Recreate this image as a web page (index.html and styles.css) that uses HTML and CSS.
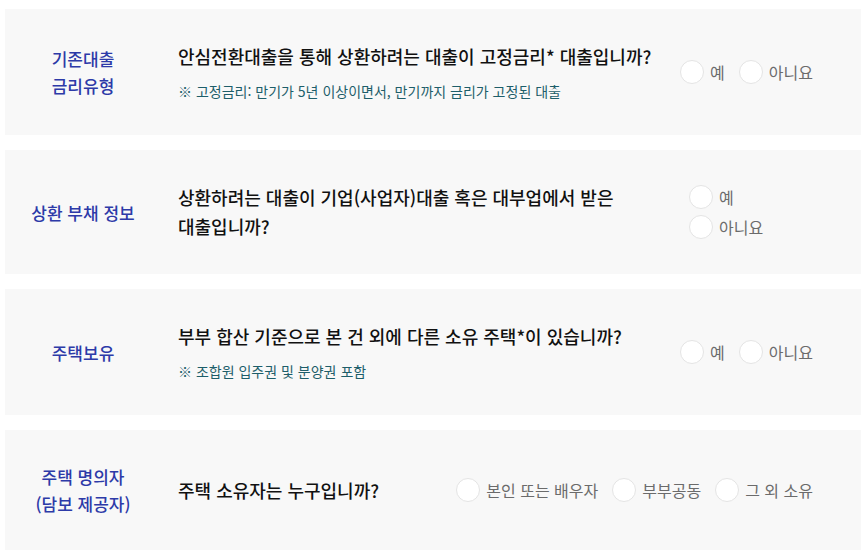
FILE: index.html
```html
<!DOCTYPE html>
<html lang="ko">
<head>
<meta charset="utf-8">
<title>안심전환대출 자격 확인</title>
<link rel="stylesheet" href="styles.css">
</head>
<body>
<div class="list">
  <section class="row">
    <div class="label">기존대출<br>금리유형</div>
    <div class="body">
      <p class="q">안심전환대출을 통해 상환하려는 대출이 고정금리* 대출입니까?</p>
      <p class="note">※ 고정금리: 만기가 5년 이상이면서, 만기까지 금리가 고정된 대출</p>
    </div>
    <div class="opts">
      <label class="opt"><span class="dot"></span>예</label>
      <label class="opt"><span class="dot"></span>아니요</label>
    </div>
  </section>

  <section class="row">
    <div class="label">상환 부채 정보</div>
    <div class="body narrow">
      <p class="q tall">상환하려는 대출이 기업(사업자)대출 혹은 대부업에서 받은 대출입니까?</p>
    </div>
    <div class="opts stack">
      <label class="opt"><span class="dot"></span>예</label>
      <label class="opt"><span class="dot"></span>아니요</label>
    </div>
  </section>

  <section class="row">
    <div class="label">주택보유</div>
    <div class="body">
      <p class="q">부부 합산 기준으로 본 건 외에 다른 소유 주택*이 있습니까?</p>
      <p class="note">※ 조합원 입주권 및 분양권 포함</p>
    </div>
    <div class="opts">
      <label class="opt"><span class="dot"></span>예</label>
      <label class="opt"><span class="dot"></span>아니요</label>
    </div>
  </section>

  <section class="row">
    <div class="label">주택 명의자<br>(담보 제공자)</div>
    <div class="body">
      <p class="q">주택 소유자는 누구입니까?</p>
    </div>
    <div class="opts">
      <label class="opt"><span class="dot"></span>본인 또는 배우자</label>
      <label class="opt"><span class="dot"></span>부부공동</label>
      <label class="opt"><span class="dot"></span>그 외 소유</label>
    </div>
  </section>
</div>
</body>
</html>
```

FILE: styles.css
```css
html, body {
  margin: 0;
  padding: 0;
  background: #ffffff;
}

body {
  font-family: "Noto Sans CJK KR", "Noto Sans", sans-serif;
  color: #111111;
  overflow: hidden;
  word-break: keep-all;
}

.list {
  display: flex;
  flex-direction: column;
  gap: 15px;
  padding: 9px 0 0 5px;
}

.row {
  display: flex;
  align-items: center;
  background: #f8f8f8;
  padding: 33px 48px 33px 0;
}

.label {
  flex: 0 0 156px;
  text-align: center;
  font-size: 17px;
  line-height: 27px;
  color: #2d3aa8;
  font-weight: 500;
}

.body {
  margin-left: 17px;
  flex: 0 1 auto;
}

.body.narrow {
  max-width: 460px;
}

.q {
  margin: 0;
  font-size: 18px;
  line-height: 28px;
  font-weight: 500;
  color: #111111;
}

.q.tall {
  line-height: 29px;
}

.note {
  margin: 10px 0 0;
  font-size: 14px;
  line-height: 22px;
  color: #1d5e6a;
}

.opts {
  margin-left: auto;
  display: flex;
  align-items: center;
  gap: 14px;
}

.opts.stack {
  flex-direction: column;
  align-items: flex-start;
  gap: 6px;
  width: 124px;
}

.opt {
  display: flex;
  align-items: center;
  gap: 6px;
  font-size: 16px;
  line-height: 24px;
  color: #6b6b6b;
}

.dot {
  width: 22px;
  height: 22px;
  border: 1px solid #e4e4e4;
  border-radius: 50%;
  background: #ffffff;
}
```
